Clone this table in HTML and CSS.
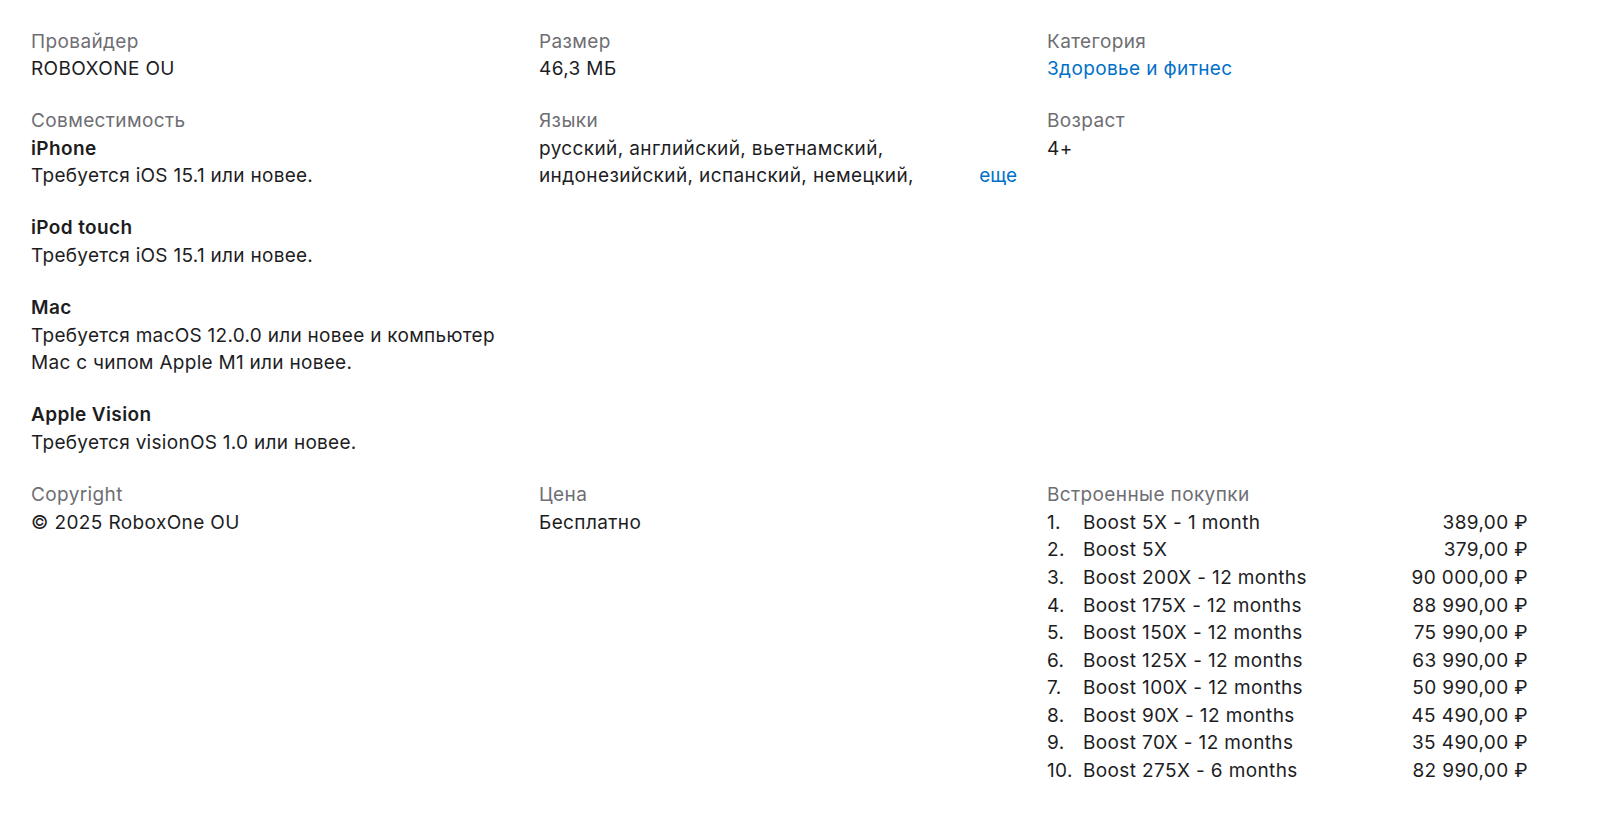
FILE: index.html
```html
<!DOCTYPE html>
<html lang="ru">
<head>
<meta charset="utf-8">
<title>Информация</title>
<link rel="stylesheet" href="styles.css">
</head>
<body>
<section class="info">
  <dl class="grid">
    <div class="item">
      <dt class="label">Провайдер</dt>
      <dd class="value">ROBOXONE OU</dd>
    </div>
    <div class="item">
      <dt class="label">Размер</dt>
      <dd class="value">46,3 МБ</dd>
    </div>
    <div class="item">
      <dt class="label">Категория</dt>
      <dd class="value"><a class="link" href="#">Здоровье и фитнес</a></dd>
    </div>

    <div class="item">
      <dt class="label">Совместимость</dt>
      <dd class="value compat">
        <dl class="devices">
          <div class="device">
            <dt class="device-name">iPhone</dt>
            <dd class="device-req">Требуется iOS 15.1 или новее.</dd>
          </div>
          <div class="device">
            <dt class="device-name">iPod touch</dt>
            <dd class="device-req">Требуется iOS 15.1 или новее.</dd>
          </div>
          <div class="device">
            <dt class="device-name">Mac</dt>
            <dd class="device-req">Требуется macOS 12.0.0 или новее и компьютер Mac с чипом Apple M1 или новее.</dd>
          </div>
          <div class="device">
            <dt class="device-name">Apple Vision</dt>
            <dd class="device-req">Требуется visionOS 1.0 или новее.</dd>
          </div>
        </dl>
      </dd>
    </div>
    <div class="item">
      <dt class="label">Языки</dt>
      <dd class="value">
        <div class="clamp">
          <p class="clamp-text">русский, английский, вьетнамский, индонезийский, испанский, немецкий,</p>
          <button class="more" type="button">еще</button>
        </div>
      </dd>
    </div>
    <div class="item">
      <dt class="label">Возраст</dt>
      <dd class="value">4+</dd>
    </div>

    <div class="item">
      <dt class="label">Copyright</dt>
      <dd class="value">© 2025 RoboxOne OU</dd>
    </div>
    <div class="item">
      <dt class="label">Цена</dt>
      <dd class="value">Бесплатно</dd>
    </div>
    <div class="item">
      <dt class="label">Встроенные покупки</dt>
      <dd class="value">
        <ol class="purchases">
          <li class="purchase"><span class="num">1.</span><span class="name">Boost 5X - 1 month</span><span class="price">389,00 ₽</span></li>
          <li class="purchase"><span class="num">2.</span><span class="name">Boost 5X</span><span class="price">379,00 ₽</span></li>
          <li class="purchase"><span class="num">3.</span><span class="name">Boost 200X - 12 months</span><span class="price">90 000,00 ₽</span></li>
          <li class="purchase"><span class="num">4.</span><span class="name">Boost 175X - 12 months</span><span class="price">88 990,00 ₽</span></li>
          <li class="purchase"><span class="num">5.</span><span class="name">Boost 150X - 12 months</span><span class="price">75 990,00 ₽</span></li>
          <li class="purchase"><span class="num">6.</span><span class="name">Boost 125X - 12 months</span><span class="price">63 990,00 ₽</span></li>
          <li class="purchase"><span class="num">7.</span><span class="name">Boost 100X - 12 months</span><span class="price">50 990,00 ₽</span></li>
          <li class="purchase"><span class="num">8.</span><span class="name">Boost 90X - 12 months</span><span class="price">45 490,00 ₽</span></li>
          <li class="purchase"><span class="num">9.</span><span class="name">Boost 70X - 12 months</span><span class="price">35 490,00 ₽</span></li>
          <li class="purchase"><span class="num">10.</span><span class="name">Boost 275X - 6 months</span><span class="price">82 990,00 ₽</span></li>
        </ol>
      </dd>
    </div>
  </dl>
</section>
</body>
</html>
```

FILE: styles.css
```css
* {
  box-sizing: border-box;
}

html, body {
  margin: 0;
  padding: 0;
  background: #ffffff;
}

body {
  font-family: Inter, "Noto Sans", "Liberation Sans", sans-serif;
  font-size: 19px;
  line-height: 27.6px;
  color: #1d1d1f;
  letter-spacing: 0.02em;
}

dl, dd, dt, p, ol {
  margin: 0;
  padding: 0;
}

.info {
  padding: 27.5px 0 0 31px;
}

.grid {
  display: grid;
  grid-template-columns: repeat(3, 478px);
  column-gap: 30px;
  row-gap: 24.5px;
}

.item {
  display: flex;
  flex-direction: column;
}

.label {
  color: #6e6e73;
}

.value {
  color: #1d1d1f;
}

.link {
  color: #0070c9;
  text-decoration: none;
}

.devices {
  display: flex;
  flex-direction: column;
  gap: 24.5px;
}

.device-name {
  font-weight: 600;
}

.device-req {
  max-width: 470px;
  letter-spacing: 0.015em;
}

.clamp {
  position: relative;
}

.clamp-text {
  margin: 0;
  max-width: 420px;
}

.more {
  position: absolute;
  right: 0;
  bottom: 0;
  border: 0;
  margin: 0;
  padding: 0 0 0 20px;
  background: #ffffff;
  font: inherit;
  color: #0070c9;
  line-height: 27.6px;
  cursor: pointer;
}

.purchases {
  list-style: none;
  display: flex;
  flex-direction: column;
  width: 481px;
}

.purchase {
  display: flex;
}

.num {
  width: 36px;
  flex: none;
}

.name {
  flex: 1;
}

.price {
  flex: none;
  text-align: right;
}
```
